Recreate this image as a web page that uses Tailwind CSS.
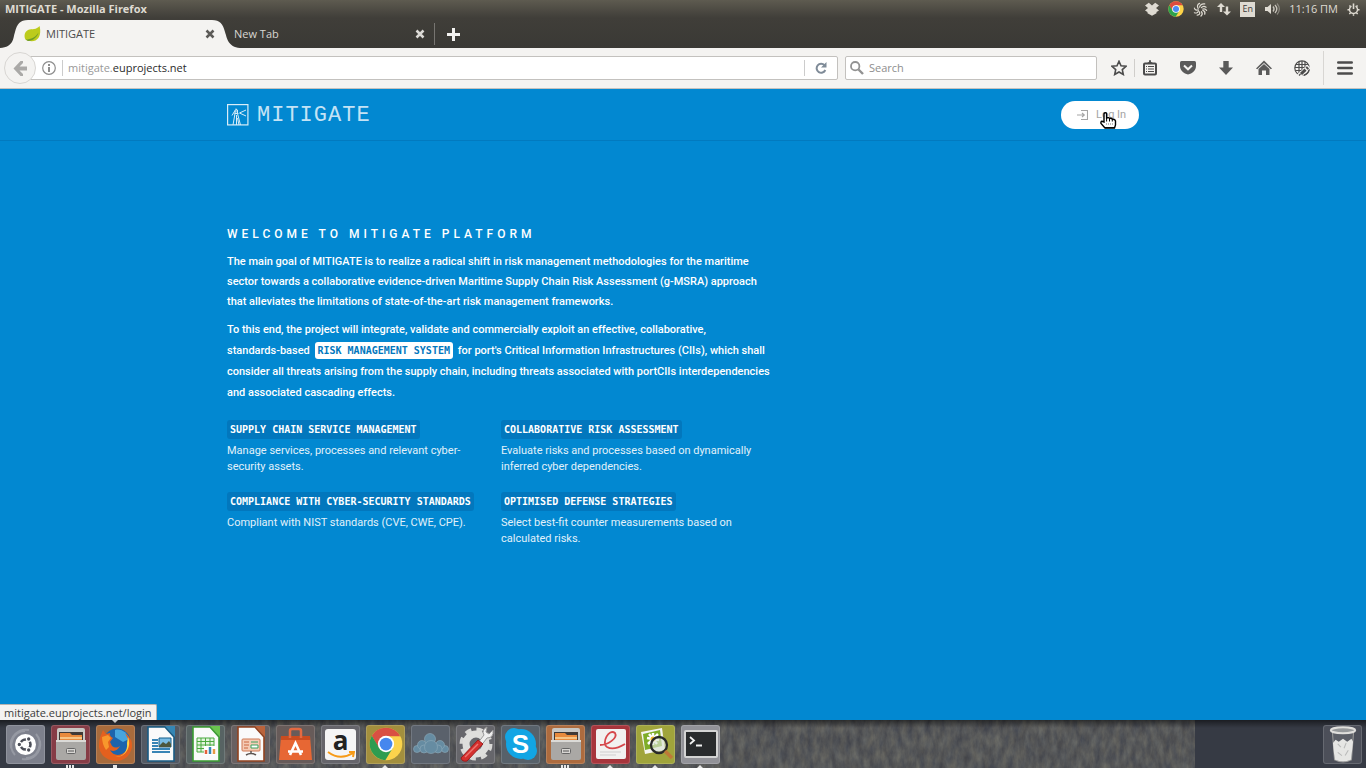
<!DOCTYPE html>
<html lang="en">
<head>
<meta charset="utf-8">
<meta name="viewport" content="width=device-width, initial-scale=1">
<title>MITIGATE - Mozilla Firefox</title>
<script src="https://cdn.jsdelivr.net/npm/@tailwindcss/browser@4"></script>
</head>
<body class="flex min-h-screen flex-col bg-[#0288d1] font-['Open_Sans','Noto_Sans',sans-serif] text-[11px] leading-4">

<!-- Desktop panel -->
<div class="flex h-[18px] items-center justify-between bg-linear-to-b from-[#5e5b50] to-[#403e39] pr-[6px] pl-[5px] text-[#dfdbd2]">
  <div class="font-bold whitespace-nowrap">MITIGATE - Mozilla Firefox</div>
  <div class="flex items-center gap-[9px]">
    <svg class="h-[14px] w-[14px]" viewBox="0 0 14 14" fill="#dfdbd2"><path d="M3.800 .8 7 3.400 10.200 .8 14 3.400 11 6 14 8.500 11.500 10V11.200L7 13.800 2.500 11.200V10L0 8.500 3 6 0 3.400z"/></svg>
    <svg class="h-4 w-4" viewBox="0 0 48 48"><circle cx="24" cy="24" r="23" fill="#fdd348"/><path d="M4 12.500A23 23 0 0 1 44 12.500L24 13 14 30z" fill="#dd4b3e"/><path d="M4 12.500A23 23 0 0 0 23 47L34 29 14 29z" fill="#2da24c"/><circle cx="24" cy="24" r="11.500" fill="#fff"/><circle cx="24" cy="24" r="9" fill="#4a8af4"/></svg>
    <svg class="h-[15px] w-[15px]" viewBox="0 0 16 16" fill="none" stroke="#dfdbd2" stroke-width="1.300" stroke-linecap="round"><path d="M7 1.500Q3.500 3 5.500 7M12.500 2Q8 1.500 7 5.500M14 5.500Q11 3.500 9 6M14.500 9Q13 6.500 10.500 7.500M12.500 13Q13.500 10 10.500 9M8.500 15Q11 13 9 10.300M4.500 14Q8 13.500 7 10.500M1.500 11.500Q5 12.500 5.800 9.500M1.500 6.500Q2.500 9.500 5.500 8.300"/></svg>
    <svg class="h-[14px] w-[14px]" viewBox="0 0 14 14" fill="#dfdbd2"><path d="M4 1 8 5H5.200V10H2.800V5H0zM10 13.500 6 9.500H8.800V4.500H11.200V9.500H14z"/></svg>
    <span class="flex h-[15px] w-[15px] items-center justify-center bg-[#dfdbd2] text-[9px] text-[#3c3b37]">En</span>
    <svg class="h-[14px] w-4" viewBox="0 0 16 14"><path d="M1 5H3.500L7 2V12L3.500 9H1z" fill="#dfdbd2"/><path d="M9 4.500c1.300 1.500 1.300 3.500 0 5M11 3c2.300 2.500 2.300 5.500 0 8" fill="none" stroke="#c9c5bc" stroke-width="1.300"/><path d="M13 1.500c3 3.500 3 7.500 0 11" fill="none" stroke="#8b887f" stroke-width="1.200"/></svg>
    <span class="whitespace-nowrap">11:16 ΠΜ</span>
    <svg class="h-[13px] w-[13px]" viewBox="0 0 14 14" fill="none" stroke="#dfdbd2"><path d="M4.800 3.300A4.300 4.300 0 1 0 9.200 3.300" stroke-width="1.500"/><path d="M7 .5V6.500" stroke-width="1.700"/><path d="M2.600 2.600l1.200 1.200M11.400 2.600l-1.200 1.200M.5 7.300H2.500M11.500 7.300h2M2.500 11.800l1.300-1.200M11.500 11.800l-1.300-1.200M7 12v1.800" stroke-width="1.600"/></svg>
  </div>
</div>

<!-- Tabs -->
<div class="flex h-[30px] items-end bg-linear-to-b from-[#403e39] to-[#3a3935] leading-4">
  <div class="relative h-7 w-60 shrink-0">
    <svg class="absolute inset-0 h-7 w-60" viewBox="0 0 240 28"><path d="M0 28C14 27 13 18 15 12 17 4 20 0 28 0H212C220 0 223 4 225 12 227 18 228 27 240 28z" fill="#f4f3f1"/></svg>
    <div class="relative flex h-7 items-center pr-[25px] pl-6 text-[#4c4c4c]">
      <svg class="h-4 w-[17px]" viewBox="0 0 17 16"><path d="M15.500 0C17 5 16.500 12 11.500 14.500 8 16 4 15 1.500 13.500 0 11 0 6 4 4 8 2.500 12.500 4 15.500 0z" fill="#bccb1c"/><path d="M1.500 13.500C7 13.500 12 11 14.500 6.500 13.500 11 9 14.800 4 15z" fill="#6f9c28"/></svg>
      <span class="ml-[5px] flex-1">MITIGATE</span>
      <button aria-label="Close tab" class="h-[10px] w-[10px]"><svg viewBox="0 0 10 10" stroke="#5c5b58" stroke-width="2.500"><path d="M1.500 1.500l7 7M8.500 1.500l-7 7"/></svg></button>
    </div>
  </div>
  <div class="-ml-[6px] flex h-7 w-[191px] items-center justify-between text-[#d8d6d2]">
    <span>New Tab</span>
    <button aria-label="Close tab" class="h-[10px] w-[10px]"><svg viewBox="0 0 10 10" stroke="#dcdad6" stroke-width="2.500"><path d="M1.500 1.500l7 7M8.500 1.500l-7 7"/></svg></button>
  </div>
  <div class="mb-[3px] ml-[9px] h-[22px] w-px bg-[#777571]"></div>
  <button aria-label="Open a new tab" class="mb-[7px] ml-3 h-[13px] w-[13px]"><svg viewBox="0 0 13 13" stroke="#f4f3f1" stroke-width="3"><path d="M6.500 0V13M0 6.500H13"/></svg></button>
</div>

<!-- Navigation bar -->
<div class="flex h-[41px] items-center border-b border-[#c4c2bf] bg-[#f4f3f1] pr-[13px] pl-1 leading-4">
  <button aria-label="Back" class="z-10 flex h-8 w-8 shrink-0 items-center justify-center rounded-full border border-[#d8d6d3] bg-[#f4f3f1]"><svg class="h-[15px] w-[15px]" viewBox="0 0 15 15" fill="#aaa9a7"><path d="M7.500 0H10L10 2 6.500 5.500H14V9.500H6.500L10 13V15H7.500L.5 7.500z"/></svg></button>
  <div class="-ml-[6px] flex h-6 min-w-0 flex-1 items-center rounded-r-xs border border-[#c3c1be] bg-white pl-[11px]">
    <svg class="h-[14px] w-[14px] shrink-0" viewBox="0 0 14 14"><circle cx="7" cy="7" r="6.300" fill="none" stroke="#8d8d8d" stroke-width="1.200"/><path d="M6 6H8V11H6zM6 3H8V5H6z" fill="#8d8d8d"/></svg>
    <span class="ml-[6px] h-4 w-px bg-[#ccc]"></span>
    <span class="ml-[5px] flex-1 text-[#999]">mitigate.<span class="text-[#2b2b2b]">euprojects.net</span></span>
    <span class="h-4 w-px bg-[#ccc]"></span>
    <button aria-label="Reload" class="mx-[10px] h-3 w-3"><svg viewBox="0 0 12 12"><path d="M9.500 3.200A4.500 4.500 0 1 0 10.300 8" fill="none" stroke="#7f8b98" stroke-width="2"/><path d="M11.500 0V5.500H6z" fill="#7f8b98"/></svg></button>
  </div>
  <label class="ml-[7px] flex h-6 w-[252px] items-center rounded-xs border border-[#c3c1be] bg-white pl-1">
    <svg class="h-[14px] w-[14px] shrink-0" viewBox="0 0 14 14" fill="none" stroke="#929292"><circle cx="5.200" cy="5.200" r="4.200" stroke-width="1.800"/><path d="M8.500 8.500 13 13" stroke-width="2.400"/></svg>
    <input aria-label="Search" placeholder="Search" class="ml-[5px] w-full min-w-0 bg-transparent outline-none placeholder:text-[#8e8e8e]">
  </label>
  <button aria-label="Bookmark this page" class="ml-[14px] h-4 w-4"><svg viewBox="0 0 16 16"><path d="M8 1.300 10 5.800 15 6.300 11.300 9.600 12.300 14.500 8 12 3.700 14.500 4.700 9.600 1 6.300 6 5.800z" fill="none" stroke="#4c4c4c" stroke-width="1.600"/></svg></button>
  <span class="ml-[7px] h-[18px] w-px bg-[#d0cecb]"></span>
  <button aria-label="Bookmarks list" class="ml-[7px] h-4 w-4"><svg viewBox="0 0 16 16"><rect x="2" y="3.500" width="12" height="11" rx="1" fill="none" stroke="#4c4c4c" stroke-width="2"/><path d="M5 3.500Q5.500 2 7 2 7-.2 8 0 9-.2 9 2 10.500 2 11 3.500z" fill="#4c4c4c"/><path d="M4 6.500H5M6 6.500H12M4 9H5M6 9H12M4 11.500H5M6 11.500H12" stroke="#4c4c4c" stroke-width="1.200"/></svg></button>
  <button aria-label="Save to Pocket" class="ml-[22px] h-4 w-4"><svg viewBox="0 0 16 16"><path d="M1.500 1H14.500Q16 1 16 2.500V6Q16 11 11 13.500L8 14.500 5 13.500Q0 11 0 6V2.500Q0 1 1.500 1z" fill="#5a5a5a"/><path d="M4 5.500 8 9.300 12 5.500" fill="none" stroke="#f4f3f1" stroke-width="2"/></svg></button>
  <button aria-label="Downloads" class="ml-[22px] h-4 w-4"><svg viewBox="0 0 16 16"><path d="M5.300 1H10.700V7.500H15L8 15 1 7.500H5.300z" fill="#5a5a5a"/></svg></button>
  <button aria-label="Home" class="ml-[22px] h-4 w-4"><svg viewBox="0 0 16 16" fill="#5a5a5a"><path d="M8 .5 16 8.500 14.800 9.300 8 3 1.200 9.300 0 8.500z"/><path d="M8 4 13.500 9V15H10V10.500H6V15H2.500V9z"/></svg></button>
  <button aria-label="Web tools" class="ml-[22px] h-4 w-4"><svg viewBox="0 0 16 16" fill="none" stroke="#4c4c4c" stroke-width="1.200"><circle cx="8" cy="8" r="7.200"/><path d="M1 7.500H15M2 4.500H14M1.500 10.500H9M5 1.500V13M8 1V11M11 1.500V8"/><path d="M5 16 15 6.500" stroke="#f4f3f1" stroke-width="4.500"/><path d="M7 14 11.500 9.700M12.500 8.700 14 7.300" stroke-width="3"/><path d="M5 15.500 6.500 14M10 15.300C13 14.500 14.800 12.500 15.200 9.500"/></svg></button>
  <span class="ml-[13px] h-[34px] w-px bg-[#d8d6d3]"></span>
  <button aria-label="Open menu" class="ml-[13px] h-4 w-4"><svg viewBox="0 0 16 16" stroke="#4c4c4c" stroke-width="2.600" stroke-linecap="round"><path d="M1.300 2.500H14.700M1.300 8H14.700M1.300 13.500H14.700"/></svg></button>
</div>

<!-- Web page -->
<div class="relative flex flex-1 flex-col bg-[#0288d1] font-[Roboto,sans-serif] text-white">
  <header class="border-b border-[#027abf]">
    <div class="mx-auto flex h-[51px] max-w-[912px] items-center justify-between">
      <a href="#" class="flex items-center gap-2 text-[#c4e3f5]">
        <svg class="h-[22px] w-[22px]" viewBox="0 0 22 22" fill="none" stroke="#d9edf8"><rect x=".6" y=".6" width="20.300" height="20.300" stroke-width="1.200"/><path d="M6 21 8 9.500V6.500Q9 4.500 10.500 6V9.500L13.500 21M9.500 11V21M7.500 9.500H11.500M10.500 14 12 21M5 11.500 8 6.500M12.500 9 19 6M12.500 9 19 12M9 4.500V8.500"/></svg>
        <span class="pt-[3px] font-['Liberation_Mono',monospace] text-[22px] leading-6 tracking-[1px]">MITIGATE</span>
      </a>
      <a href="#login" class="relative flex h-7 w-[78px] cursor-pointer items-center rounded-full bg-white pl-4 text-[#a5a5a5]">
        <svg class="h-[10px] w-[11px]" viewBox="0 0 11 10" fill="none" stroke="#a5a5a5"><path d="M4 .5H10.500V9.500H4M0 5H7M5 3 7.300 5 5 7" stroke-width="1.100"/></svg>
        <span class="ml-2 whitespace-nowrap">Log In</span>
        <svg class="absolute top-[11px] left-[39px] h-[17px] w-[17px]" viewBox="0 0 17 17"><path d="M4 10V2Q4 .7 5.300 .7T6.600 2V6Q9 5 9.500 6.500 12 5.800 12.300 7.300 15 7 15.500 9V13L14.500 16H5L1 11.500Q.5 9.500 2 9.300z" fill="#fff" stroke="#000" stroke-width="1.400"/><path d="M6.600 6V9.500M9.500 6.500V9.500M12.300 7.300V9.500M5 15.700H14.500" stroke="#000"/><path d="M6 12H13" stroke="#777" stroke-dasharray="1 1"/></svg>
      </a>
    </div>
  </header>

  <main class="mx-auto w-full max-w-[912px] flex-1 pt-[83px]">
    <h1 class="text-xs leading-5 font-medium tracking-[4px] whitespace-nowrap">WELCOME TO MITIGATE PLATFORM</h1>
    <p class="mt-2 leading-5 font-medium whitespace-nowrap">The main goal of MITIGATE is to realize a radical shift in risk management methodologies for the maritime<br>sector towards a collaborative evidence-driven Maritime Supply Chain Risk Assessment (g-MSRA) approach<br>that alleviates the limitations of state-of-the-art risk management frameworks.</p>
    <p class="mt-[7px] leading-[21px] font-medium whitespace-nowrap">To this end, the project will integrate, validate and commercially exploit an effective, collaborative,<br>standards-based <strong class="mx-[2px] rounded-[3px] bg-white px-[3px] py-[3px] font-['DejaVu_Sans_Mono',monospace] text-[10px] font-bold text-[#0277bd]">RISK MANAGEMENT SYSTEM</strong> for port's Critical Information Infrastructures (CIIs), which shall<br>consider all threats arising from the supply chain, including threats associated with portCIIs interdependencies<br>and associated cascading effects.</p>
    <div class="mt-[17px] grid max-w-[548px] grid-cols-2 gap-y-[17px] whitespace-nowrap text-[#e1f1fa]">
      <section>
        <h2 class="w-fit rounded-[3px] bg-[#0277bd] px-[3px] font-['DejaVu_Sans_Mono',monospace] text-[10px] leading-[19px] font-bold text-white">SUPPLY CHAIN SERVICE MANAGEMENT</h2>
        <p class="mt-1">Manage services, processes and relevant cyber-<br>security assets.</p>
      </section>
      <section>
        <h2 class="w-fit rounded-[3px] bg-[#0277bd] px-[3px] font-['DejaVu_Sans_Mono',monospace] text-[10px] leading-[19px] font-bold text-white">COLLABORATIVE RISK ASSESSMENT</h2>
        <p class="mt-1">Evaluate risks and processes based on dynamically<br>inferred cyber dependencies.</p>
      </section>
      <section>
        <h2 class="w-fit rounded-[3px] bg-[#0277bd] px-[3px] font-['DejaVu_Sans_Mono',monospace] text-[10px] leading-[19px] font-bold text-white">COMPLIANCE WITH CYBER-SECURITY STANDARDS</h2>
        <p class="mt-1">Compliant with NIST standards (CVE, CWE, CPE).</p>
      </section>
      <section>
        <h2 class="w-fit rounded-[3px] bg-[#0277bd] px-[3px] font-['DejaVu_Sans_Mono',monospace] text-[10px] leading-[19px] font-bold text-white">OPTIMISED DEFENSE STRATEGIES</h2>
        <p class="mt-1">Select best-fit counter measurements based on<br>calculated risks.</p>
      </section>
    </div>
  </main>

  <div class="absolute bottom-0 left-0 flex h-4 items-center rounded-tr-xs border-t border-r border-[#b5b3b0] bg-[#f4f3f1] pr-1 pl-1 font-['Open_Sans',sans-serif] whitespace-nowrap text-[#3c3c3c]">mitigate.euprojects.net/login</div>
</div>

<!-- Launcher -->
<nav aria-label="Launcher" class="relative flex h-12 items-center gap-[6px] overflow-hidden bg-[#363a44] pr-1 pl-[6px]">
  <svg class="absolute inset-y-0 right-[171px] left-[170px] h-12 w-[calc(100%-341px)]" aria-hidden="true">
    <filter id="rock" x="0" y="0" width="100%" height="100%" color-interpolation-filters="sRGB"><feTurbulence type="fractalNoise" baseFrequency="0.16 0.07" numOctaves="4" seed="8"/><feColorMatrix values=".2 0 0 0 .235  .19 .02 0 0 .235  .13 .05 0 0 .255  0 0 0 0 1"/></filter>
    <rect width="100%" height="100%" filter="url(#rock)"/>
  </svg>
  <div class="absolute inset-x-0 top-0 h-2 bg-linear-to-b from-black/50 to-transparent"></div>

  <button aria-label="Dash" class="relative flex h-[39px] w-[39px] shrink-0 items-center justify-center rounded-[3px] border border-white/15 bg-[#7d808c]">
    <svg class="h-[37px] w-[37px]" viewBox="0 0 37 37" fill="none"><path d="M4 22C2 10 12 2 22 4M33 15c2 12-8 20-18 18M8 29C0 20 6 5 18 5M29 8c8 9 2 24-10 24" stroke="#9699a3" stroke-width="2"/><circle cx="18.500" cy="18.500" r="10.500" fill="#fff"/><circle cx="18.500" cy="18.500" r="5" stroke="#4b4e58" stroke-width="2.600"/><g fill="#4b4e58" stroke="#fff" stroke-width="1.200"><circle cx="12.300" cy="18.500" r="2.300"/><circle cx="21.700" cy="13" r="2.300"/><circle cx="21.700" cy="24" r="2.300"/></g></svg>
  </button>

  <button aria-label="Files" class="relative flex h-[39px] w-[39px] shrink-0 items-center justify-center rounded-[3px] border border-white/15 bg-[#863c46]">
    <svg class="h-[34px] w-8" viewBox="0 0 32 34"><path d="M2 3Q2 1 4 1H28Q30 1 30 3V15H2z" fill="#c9c7c3"/><path d="M4 5H28V13H4z" fill="#403936"/><path d="M5 6H15L17 8H27V14H5z" fill="#e88a3c"/><path d="M5 10H27V12H5z" fill="#f6c485"/><path d="M1 13H31V31Q31 33 29 33H3Q1 33 1 31z" fill="#aaa8a5"/><path d="M1 13H31V15H1z" fill="#dbdad7"/><rect x="11.500" y="21.500" width="9" height="5" rx="1" fill="#d7d5d2" stroke="#666"/><path d="M13 24H19" stroke="#555"/></svg>
  </button>

  <button aria-label="Firefox" class="relative flex h-[39px] w-[39px] shrink-0 items-center justify-center rounded-[3px] border border-white/15 bg-[#a86b3c]">
    <svg class="h-[35px] w-[35px]" viewBox="0 0 35 35"><circle cx="19" cy="15" r="13.500" fill="#1c64ad"/><path d="M17 3C23 1 30 6 31 12L25 15 17 10z" fill="#46a5de"/><path d="M3 8 5 3 8 7 12 6Q11 9 15 11L12 15 14 19Q18 22 22 19 18 26 12 23 16 30 24 27 32 23 30 12 28 8 27 6 35 12 34 20 31 34 17 34 3 32 1 20 1 12 3 8z" fill="#e4601e"/><path d="M30 10C34 20 27 31 17 30 25 30 30 24 29 16z" fill="#ffd045"/><path d="M4 10 10 8 13 11 10 15 11 20 8 23Q4 17 4 10z" fill="#f8972c"/></svg>
  </button>

  <button aria-label="LibreOffice Writer" class="relative flex h-[39px] w-[39px] shrink-0 items-center justify-center rounded-[3px] border border-white/15 bg-[#535963]">
    <svg class="h-9 w-[30px]" viewBox="0 0 30 36"><path d="M2 1H19L28 11V35H2z" fill="#fafafa" stroke="#195b84" stroke-width="1.600"/><path d="M19 0H29V11z" fill="#3486b5"/><path d="M6 14H12M6 17H12M6 20H12M6 23H24M6 26H24" stroke="#3884b5" stroke-width="1.800"/><path d="M13 12H25V21H13z" fill="#79bce4" stroke="#17618d"/><path d="M13 20 17 16 20 18 23 15 25 18V21H13z" fill="#4c573d"/></svg>
  </button>

  <button aria-label="LibreOffice Calc" class="relative flex h-[39px] w-[39px] shrink-0 items-center justify-center rounded-[3px] border border-white/15 bg-[#576363]">
    <svg class="h-9 w-[30px]" viewBox="0 0 30 36"><path d="M2 1H19L28 11V35H2z" fill="#fafafa" stroke="#3a9c31" stroke-width="1.600"/><path d="M19 0H29V11z" fill="#6ac44e"/><path d="M6 12H23V26H6z" fill="#e2f4dd"/><path d="M6 12H23M6 15.500H23M6 19H23M6 22.500H23M6 26H23M6 12V26M10 12V26M14.500 12V26M19 12V26M23 12V26" stroke="#4baa40"/><path d="M13 20H25V29H13z" fill="#fff"/><path d="M15 28V24" stroke="#e4613b" stroke-width="2.500"/><path d="M19 28V21" stroke="#3486b5" stroke-width="2.500"/><path d="M23 28V23" stroke="#e69b43" stroke-width="2.500"/></svg>
  </button>

  <button aria-label="LibreOffice Impress" class="relative flex h-[39px] w-[39px] shrink-0 items-center justify-center rounded-[3px] border border-white/15 bg-[#686061]">
    <svg class="h-9 w-[30px]" viewBox="0 0 30 36"><path d="M2 1H19L28 11V35H2z" fill="#fafafa" stroke="#91411f" stroke-width="1.600"/><path d="M19 0H29V11z" fill="#bb633b"/><rect x="6" y="13" width="18" height="12" rx="1" fill="#f4cbb5" stroke="#cf7955"/><path d="M8 16H13M8 19H13M8 22H12" stroke="#ca6740"/><path d="M15 16H22M15 22V19H22V22z" stroke="#3ba15e" fill="#fff"/><path d="M15 25V28M10 29Q15 26 20 29" stroke="#5c5450" fill="none" stroke-width="1.500"/></svg>
  </button>

  <button aria-label="Ubuntu Software" class="relative flex h-[39px] w-[39px] shrink-0 items-center justify-center rounded-[3px] border border-white/15 bg-[#675b59]">
    <svg class="h-[35px] w-[35px]" viewBox="0 0 35 35"><path d="M3 9H32L34 33H1z" fill="#e76734"/><path d="M3 9H32V13H3z" fill="#ca4c20"/><path d="M12 11V4Q12 2 14 2H21Q23 2 23 4V11" fill="none" stroke="#e36a42" stroke-width="2.500"/><path d="M12 28 17.500 16 23 28M10 24.500H25" fill="none" stroke="#fff" stroke-width="2.600"/></svg>
  </button>

  <button aria-label="Amazon" class="relative flex h-[39px] w-[39px] shrink-0 items-center justify-center rounded-[3px] border border-white/15 bg-[#66656b]">
    <span class="flex h-[31px] w-[31px] flex-col items-center rounded-[3px] bg-[#f5f5f5] font-['Open_Sans',sans-serif] text-[26px] leading-[22px] font-bold text-[#222]">a<svg class="h-2 w-7" viewBox="0 0 28 8" fill="none" stroke="#f79a16" stroke-width="2"><path d="M1 1Q13 10 26 2M22 1H27L26 6"/></svg></span>
  </button>

  <button aria-label="Chrome" class="relative flex h-[39px] w-[39px] shrink-0 items-center justify-center rounded-[3px] border border-white/15 bg-[#a38f3d]">
    <svg class="h-[34px] w-[34px]" viewBox="0 0 48 48"><circle cx="24" cy="24" r="23" fill="#fbd34c"/><path d="M4 12.500A23 23 0 0 1 44 13L24 13 14 30z" fill="#d95043"/><path d="M4 12.500A23 23 0 0 0 23 47L34 29 14 29z" fill="#2d9c50"/><circle cx="24" cy="24" r="11.500" fill="#fff"/><circle cx="24" cy="24" r="9" fill="#4587ee"/></svg>
  </button>

  <button aria-label="ownCloud" class="relative flex h-[39px] w-[39px] shrink-0 items-center justify-center rounded-[3px] border border-white/15 bg-[#5a616b]">
    <svg class="h-[22px] w-9" viewBox="0 0 36 22" fill="#668ca2" stroke="#8eabba" stroke-width=".6"><circle cx="4" cy="16" r="3.500"/><circle cx="32" cy="16" r="3.500"/><circle cx="9" cy="12" r="4.500"/><circle cx="27" cy="12" r="4.500"/><circle cx="17" cy="6" r="5.500"/><circle cx="11" cy="16" r="4"/><circle cx="25" cy="16" r="4"/><circle cx="18" cy="14" r="6.500"/></svg>
  </button>

  <button aria-label="System Settings" class="relative flex h-[39px] w-[39px] shrink-0 items-center justify-center rounded-[3px] border border-white/15 bg-[#66666b]">
    <svg class="h-9 w-9" viewBox="0 0 36 36"><circle cx="18" cy="18" r="14" fill="none" stroke="#d9d9d7" stroke-width="5" stroke-dasharray="6 5"/><circle cx="18" cy="18" r="10" fill="none" stroke="#dededc" stroke-width="7"/><path d="M16 22 26 9Q23 4 29 1L28 6 31 8 35 4Q36 12 29 12L19 25z" fill="#eee" stroke="#999"/><path d="M20 14 25 18 9 35Q4 36 3 32z" fill="#d5302e" stroke="#9c1b1c"/><path d="M7 31 20 18" stroke="#ee7670" stroke-width="1.500"/></svg>
  </button>

  <button aria-label="Skype" class="relative flex h-[39px] w-[39px] shrink-0 items-center justify-center rounded-[3px] border border-white/15 bg-[#57616a]">
    <svg class="absolute h-[34px] w-[34px]" viewBox="0 0 34 34" fill="#12a5e4"><circle cx="17" cy="17" r="15"/><circle cx="10" cy="10" r="9"/><circle cx="24" cy="24" r="9"/></svg>
    <span class="relative font-['Liberation_Sans',sans-serif] text-[26px] leading-7 font-bold text-white">S</span>
  </button>

  <button aria-label="Archive files" class="relative flex h-[39px] w-[39px] shrink-0 items-center justify-center rounded-[3px] border border-white/15 bg-[#ad6b3e]">
    <svg class="h-[34px] w-8" viewBox="0 0 32 34"><path d="M2 3Q2 1 4 1H28Q30 1 30 3V15H2z" fill="#c9c7c3"/><path d="M4 5H28V13H4z" fill="#403936"/><path d="M5 6H15L17 8H27V14H5z" fill="#e88a3c"/><path d="M5 10H27V12H5z" fill="#f6c485"/><path d="M1 13H31V31Q31 33 29 33H3Q1 33 1 31z" fill="#aaa8a5"/><path d="M1 13H31V15H1z" fill="#dbdad7"/><rect x="11.500" y="21.500" width="9" height="5" rx="1" fill="#d7d5d2" stroke="#666"/><path d="M13 24H19" stroke="#555"/></svg>
  </button>

  <button aria-label="Document Viewer" class="relative flex h-[39px] w-[39px] shrink-0 items-center justify-center rounded-[3px] border border-white/15 bg-[#a7353c]">
    <svg class="h-8 w-8" viewBox="0 0 32 32"><rect x="1" y="1" width="30" height="30" rx="2" fill="#f2f1f0"/><path d="M5 17C13 17 23 10 20 5 14 0 6 15 12 19 17 22 25 19 30 16" fill="none" stroke="#d6474b" stroke-width="1.800"/><path d="M5 24H26M5 27H21" stroke="#cfcfcf"/></svg>
  </button>

  <button aria-label="Image Viewer" class="relative flex h-[39px] w-[39px] shrink-0 items-center justify-center rounded-[3px] border border-white/15 bg-[#a0a43b]">
    <svg class="h-9 w-9" viewBox="0 0 36 36"><path d="M3 6 24 2 27 24 7 28z" fill="#f4f4ef"/><path d="M5 8 22 4 24 20 7 24z" fill="#7ead28"/><path d="M15 7V19M9 12 21 14M11 8 19 18M20 8 10 18" stroke="#fff" stroke-width="2.500"/><circle cx="15" cy="13" r="2.500" fill="#ecb92d"/><circle cx="21" cy="19" r="8" fill="#d9e2d3" fill-opacity=".65" stroke="#292929" stroke-width="2.300"/><path d="M27 25 34 32" stroke="#bd7938" stroke-width="3.500"/></svg>
  </button>

  <button aria-label="Terminal" class="relative flex h-[39px] w-[39px] shrink-0 items-center justify-center rounded-[3px] border border-white/15 bg-[#929298]">
    <svg class="h-7 w-[34px]" viewBox="0 0 34 28"><rect x="1" y="1" width="32" height="26" rx="1" fill="#292b2d" stroke="#d4d4d4" stroke-width="2"/><path d="M6 7 10 10.500 6 14M12 15.500H18" fill="none" stroke="#f1f1f1" stroke-width="1.800"/></svg>
  </button>

  <button aria-label="Trash" class="relative ml-auto flex h-[39px] w-[39px] shrink-0 items-center justify-center rounded-[3px] border border-white/15 bg-[#4c4f59]">
    <svg class="h-[37px] w-7" viewBox="0 0 26 35"><path d="M3 6H23L21 32Q13 36 5 32z" fill="#5c5f67" stroke="#999"/><path d="M3.500 16 6 13 9 15 13 12 17 15 21 12 22.500 15 21.500 24 20.500 32Q13 35 5.500 32L4.500 26z" fill="#e6e6e4"/><path d="M8 17 11 20M16 16 14 21M8 25 12 28M18 23 15 28" stroke="#b9bab9"/><ellipse cx="13" cy="4" rx="11.500" ry="2.800" fill="#96999b" stroke="#e0dfdc" stroke-width="2"/></svg>
  </button>

  <!-- Marks of the running applications, on the launcher's lower edge -->
  <svg class="pointer-events-none absolute bottom-0 left-0 h-[3px] w-[725px]" viewBox="0 0 725 3" fill="#e6e6e6" aria-hidden="true"><path d="M66 0H68V3H66zM69 0H71V3H69zM72 0H74V3H72zM113 0H117V3H113zM385 0 388 3H382zM561 0H563V3H561zM564 0H566V3H564zM567 0H569V3H567zM610 0 613 3H607zM655 0 658 3H652zM700 0 703 3H697z"/></svg>
  <svg class="pointer-events-none absolute top-0 left-[112px] h-[3px] w-[6px]" viewBox="0 0 6 3" fill="#c9c9c9" aria-hidden="true"><path d="M0 0H6L3 3z"/></svg>
</nav>
</body>
</html>
